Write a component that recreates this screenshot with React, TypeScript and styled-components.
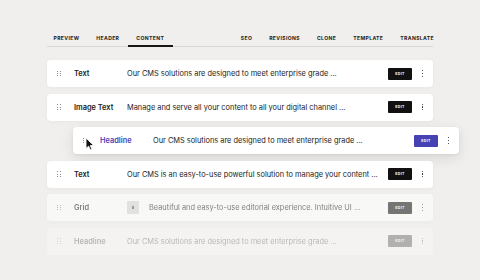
import styled, { createGlobalStyle } from "styled-components";

const GlobalStyle = createGlobalStyle`
  html, body {
    margin: 0;
    height: 280px;
    overflow: hidden;
    background: #f0efed;
    font-family: Inter, "Noto Sans", sans-serif;
    color: #1b1b1b;
  }
`;

const Page = styled.div`
  width: 386px;
  padding: 30px 0 0 47px;
`;

const TabBar = styled.nav`
  display: flex;
  height: 16px;
  align-items: stretch;
  border-bottom: 1px solid #d9d8d5;
`;

const TabGroup = styled.div<{ $end?: boolean }>`
  display: flex;
  margin-left: ${({ $end }) => ($end ? "auto" : "-2px")};
  margin-right: ${({ $end }) => ($end ? "-9.5px" : "0")};
`;

const Tab = styled.span<{ $active?: boolean }>`
  display: flex;
  align-items: center;
  margin-bottom: -1px;
  padding: 0 8.5px;
  border-bottom: 2px solid ${({ $active }) => ($active ? "#161616" : "transparent")};
  color: #222;
  font-size: 5.1px;
  font-weight: 700;
  letter-spacing: 0.07em;
  white-space: nowrap;
`;

const List = styled.div`
  display: flex;
  flex-direction: column;
  gap: 6.5px;
  margin-top: 13px;
`;

const Row = styled.div<{ $fade?: number; $lifted?: boolean }>`
  position: relative;
  display: flex;
  height: 27px;
  align-items: center;
  border-radius: 4px;
  background: #fff;
  box-shadow: ${({ $lifted }) =>
    $lifted
      ? "0 4px 14px rgba(0, 0, 0, 0.10), 0 1px 3px rgba(0, 0, 0, 0.06)"
      : "0 1px 4px rgba(0, 0, 0, 0.04)"};
  opacity: ${({ $fade }) => $fade ?? 1};
  transform: ${({ $lifted }) => ($lifted ? "translateX(26px)" : "none")};
`;

const Handle = styled.span`
  display: grid;
  grid-template-columns: 1px 1px;
  grid-auto-rows: 1px;
  gap: 1.3px 1.5px;
  width: 4px;
  margin: 0 13px 0 10px;

  i {
    width: 1.1px;
    height: 1.1px;
    border-radius: 50%;
    background: #6a6a6a;
  }
`;

const Label = styled.span<{ $accent?: boolean }>`
  width: 53px;
  color: ${({ $accent }) => ($accent ? "#4a44b5" : "#1b1b1b")};
  font-size: 7.4px;
  font-weight: 600;
  white-space: nowrap;
`;

const Thumb = styled.span`
  display: grid;
  width: 12px;
  height: 13px;
  margin-right: 10px;
  place-items: center;
  border-radius: 1px;
  background: #d6d5d3;

  &::after {
    content: "";
    width: 1.2px;
    height: 2.5px;
    background: #555;
  }
`;

const Description = styled.span`
  flex: 1;
  overflow: hidden;
  color: #222;
  font-size: 7.4px;
  font-weight: 400;
  white-space: nowrap;
`;

const EditButton = styled.span<{ $accent?: boolean }>`
  display: grid;
  width: 24px;
  height: 12px;
  place-items: center;
  border-radius: 1px;
  background: ${({ $accent }) => ($accent ? "#4642b4" : "#111")};
  color: #fff;
  font-size: 3.6px;
  font-weight: 700;
  letter-spacing: 0.08em;
`;

const Kebab = styled.span`
  display: flex;
  flex-direction: column;
  gap: 1.4px;
  width: 21px;
  align-items: center;

  i {
    width: 1.4px;
    height: 1.4px;
    border-radius: 50%;
    background: #222;
  }
`;

const Cursor = styled.svg`
  position: absolute;
  left: 12px;
  top: 10px;
  width: 10px;
  height: 14px;
`;

type Block = {
  label: string;
  text: string;
  fade?: number;
  lifted?: boolean;
  thumb?: boolean;
};

const blocks: Block[] = [
  { label: "Text", text: "Our CMS solutions are designed to meet enterprise grade ..." },
  { label: "Image Text", text: "Manage and serve all your content to all your digital channel ..." },
  { label: "Headline", text: "Our CMS solutions are designed to meet enterprise grade ...", lifted: true },
  { label: "Text", text: "Our CMS is an easy-to-use powerful solution to manage your content ..." },
  { label: "Grid", text: "Beautiful and easy-to-use editorial experience. Intuitive UI ...", fade: 0.55, thumb: true },
  { label: "Headline", text: "Our CMS solutions are designed to meet enterprise grade ...", fade: 0.28 },
];

function DragHandle() {
  return (
    <Handle aria-hidden="true">
      <i /><i /><i /><i /><i /><i />
    </Handle>
  );
}

function BlockRow({ block }: { block: Block }) {
  return (
    <Row $fade={block.fade} $lifted={block.lifted}>
      <DragHandle />
      <Label $accent={block.lifted}>{block.label}</Label>
      {block.thumb && <Thumb />}
      <Description>{block.text}</Description>
      <EditButton $accent={block.lifted}>EDIT</EditButton>
      <Kebab aria-hidden="true">
        <i /><i /><i />
      </Kebab>
      {block.lifted && (
        <Cursor viewBox="0 0 10 14">
          <path
            d="M1 1 L1 11.5 L3.6 9.2 L5.4 13 L7 12.3 L5.3 8.6 L8.8 8.6 Z"
            fill="#111"
            stroke="#fff"
            strokeWidth="0.9"
            strokeLinejoin="round"
          />
        </Cursor>
      )}
    </Row>
  );
}

export default function App() {
  return (
    <>
      <GlobalStyle />
      <Page>
        <TabBar>
          <TabGroup>
            <Tab>PREVIEW</Tab>
            <Tab>HEADER</Tab>
            <Tab $active>CONTENT</Tab>
          </TabGroup>
          <TabGroup $end>
            <Tab>SEO</Tab>
            <Tab>REVISIONS</Tab>
            <Tab>CLONE</Tab>
            <Tab>TEMPLATE</Tab>
            <Tab>TRANSLATE</Tab>
          </TabGroup>
        </TabBar>
        <List>
          {blocks.map((block, i) => (
            <BlockRow key={i} block={block} />
          ))}
        </List>
      </Page>
    </>
  );
}
